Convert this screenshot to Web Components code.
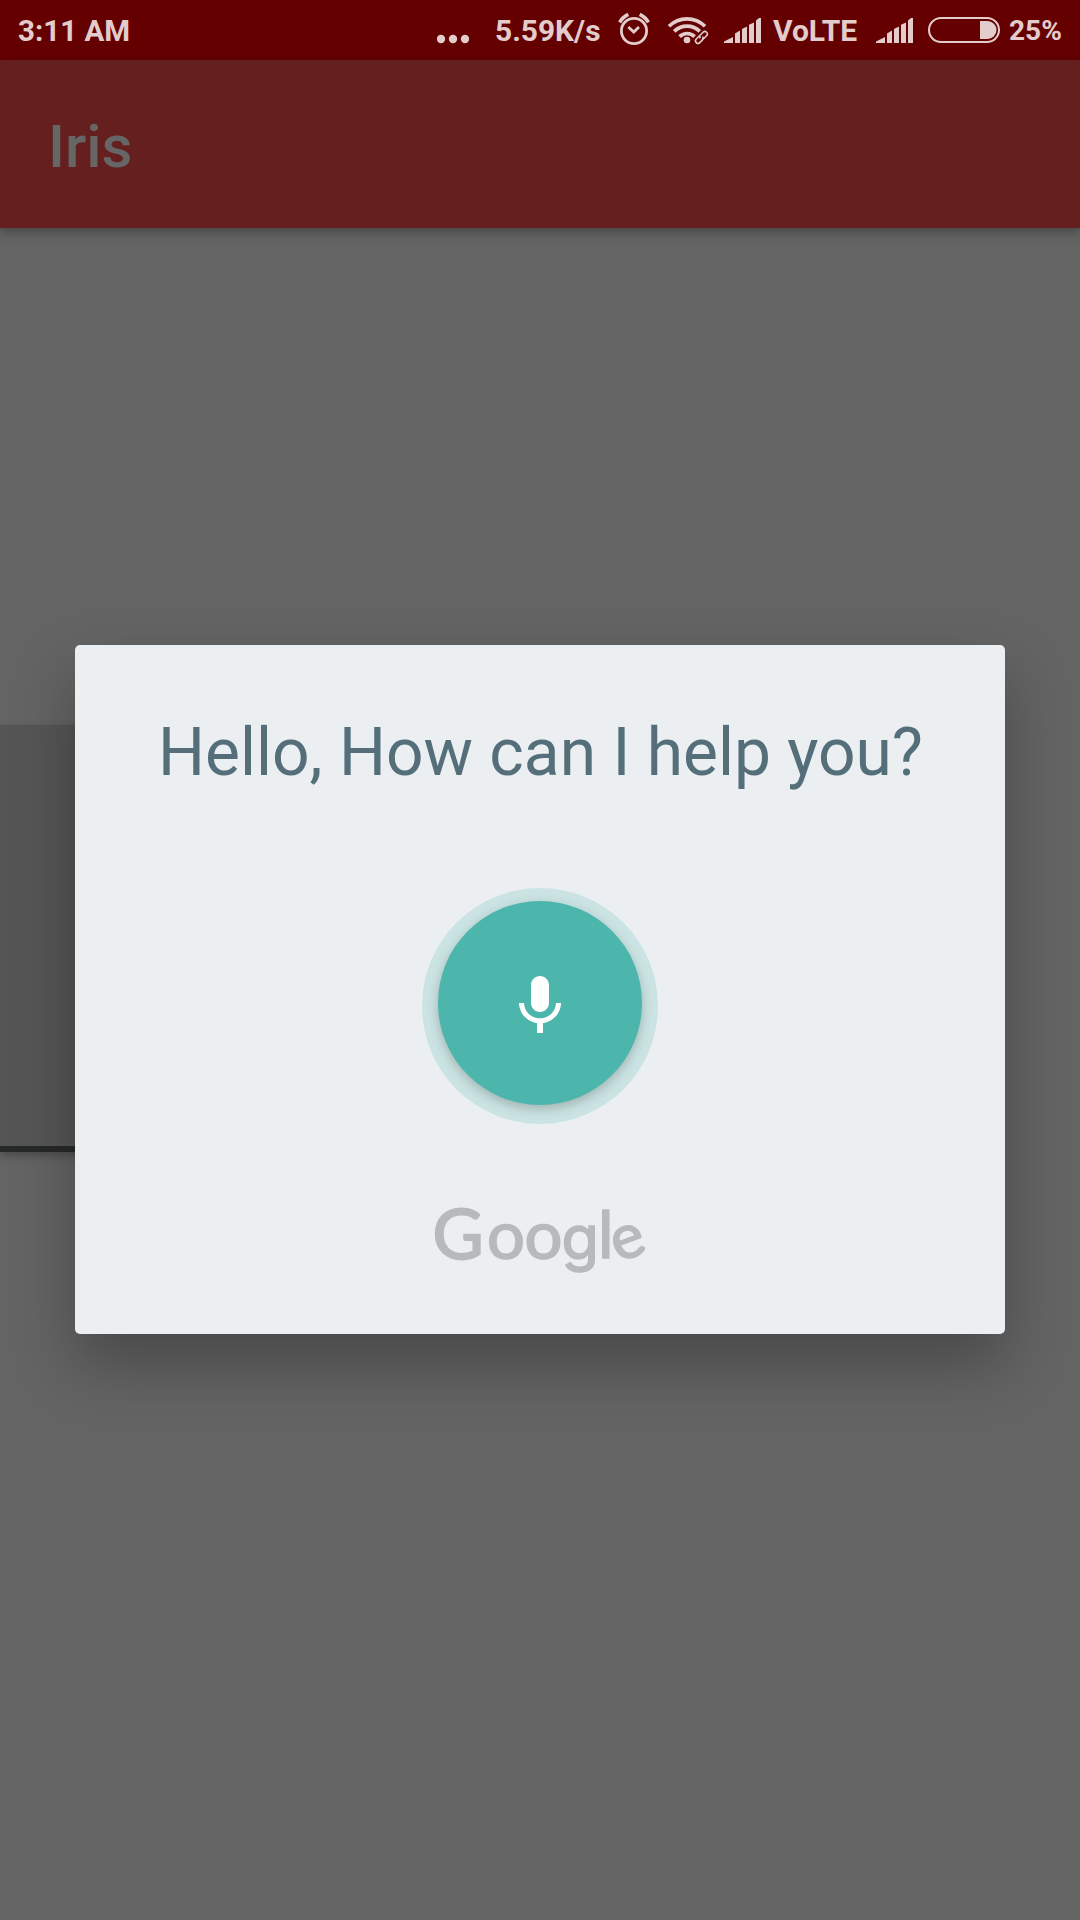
<!DOCTYPE html>
<html lang="en">
<head>
<meta charset="utf-8">
<title>Iris</title>
<style>
html,body{margin:0;padding:0;background:#646464}
body{font-family:Roboto,sans-serif;width:1080px;height:1920px;overflow:hidden}
</style>
</head>
<body>
<iris-screen></iris-screen>
<script>
const define = (name, html) => customElements.define(name, class extends HTMLElement {
  constructor() {
    super();
    const t = document.createElement('template');
    t.innerHTML = html;
    this.attachShadow({ mode: 'open' }).append(t.content.cloneNode(true));
  }
});

define('signal-icon', `
<style>:host{display:block;width:38px;height:60px}svg{display:block}</style>
<svg width="38" height="60" viewBox="0 0 38 60" fill="#e3cccc">
<path d="M0 43v-1.6L9 37v6zM11 43V33.4l5-2.8V43zM18 43V29l5-2.6V43zM25 43V24.8l5-2.4V43zM32 43V20.4l3-2.4h2v25z"/></svg>`);

define('alarm-icon', `
<style>:host{display:block;width:34px;height:60px}svg{display:block}</style>
<svg width="34" height="60" viewBox="617 0 34 60" fill="none" stroke="#e3cccc">
<circle cx="634" cy="31" r="12.6" stroke-width="2.8"/>
<path d="M628.3 27l5.5 5 5.2-5" stroke-width="2.8"/>
<path d="M619.7 22.4q2.6-5 8.6-8M639.7 14.4q6 3 8.6 8" stroke-width="3.6"/></svg>`);

define('wifi-icon', `
<style>:host{display:block;width:42px;height:60px}svg{display:block}</style>
<svg width="42" height="60" viewBox="667 0 42 60" fill="none" stroke="#e3cccc" stroke-width="3.7">
<path d="M669 26.3a25.5 25.5 0 0 1 36 0M674.2 31.4a18.2 18.2 0 0 1 25.6 0M679.6 36.6a10.6 10.6 0 0 1 15 0"/>
<circle cx="687" cy="40" r="3.3" fill="#e3cccc" stroke="none"/>
<g transform="rotate(-45 701.4 37.4)"><rect x="693" y="34.4" width="17" height="6" rx="3" stroke="#640000" stroke-width="3" fill="#640000"/>
<g stroke-width="1.6"><path d="M701.6 34.9h-5a2.500 2.500 0 0 0 0 5h3.500q2.300 0 2.600-2.300"/><path d="M701.200 39.900h5a2.500 2.500 0 0 0 0-5h-3.500q-2.300 0-2.600 2.300"/></g></g></svg>`);

define('battery-icon', `
<style>:host{display:block;width:72px;height:60px}svg{display:block}</style>
<svg width="72" height="60" viewBox="0 0 72 60">
<rect x="1" y="18" width="70" height="24" rx="12" fill="none" stroke="#e3cccc" stroke-width="2"/>
<path d="M52 21h7.500a9 9 0 0 1 0 18H52z" fill="#e3cccc"/></svg>`);

define('status-text', `
<style>:host{display:block;height:60px;font:700 29.5px/63px Roboto,sans-serif;color:#e3cccc;white-space:nowrap}</style><slot></slot>`);

define('status-bar', `
<style>
:host{display:flex;height:60px;background:#640000;box-sizing:border-box;padding-left:18px}
.time{width:419px}.dots{display:block;width:32px}
.rate{width:105px;margin-left:26px;font-size:29.9px;line-height:61px}
alarm-icon{margin-left:17px}wifi-icon{margin-left:16px}
.s1{margin-left:15px}.volte{width:87px;margin-left:11px;font-size:30px;line-height:61px}.s2{margin-left:16px}
battery-icon{margin-left:14px}.pct{margin-left:9px;font-size:28px;line-height:61px}
</style>
<status-text class="time">3:11 AM</status-text>
<svg class="dots" width="32" height="60" viewBox="0 0 32 60" fill="#e3cccc"><circle cx="4" cy="39" r="4.200"/><circle cx="16" cy="39" r="4.200"/><circle cx="28" cy="39" r="4.200"/></svg>
<status-text class="rate">5.59K/s</status-text>
<alarm-icon></alarm-icon>
<wifi-icon></wifi-icon>
<signal-icon class="s1"></signal-icon>
<status-text class="volte">VoLTE</status-text>
<signal-icon class="s2"></signal-icon>
<battery-icon></battery-icon>
<status-text class="pct">25%</status-text>`);

define('app-bar', `
<style>
:host{display:flex;align-items:center;height:168px;padding:5px 48px 0;box-sizing:border-box;background:#651f1f;color:#666;
box-shadow:0 4px 10px rgba(0,0,0,.32);font:500 60px/70px Roboto,sans-serif}
</style><slot></slot>`);

define('back-card', `
<style>
:host{display:block;width:540px;height:427px;box-sizing:border-box;background:#555;border-bottom:6px solid #272928;
box-shadow:0 4px 8px rgba(0,0,0,.25)}
</style>`);

define('mic-button', `
<style>
:host{display:flex;width:236px;height:236px;border-radius:50%;background:#cbe4e3;justify-content:center;align-items:flex-start;padding-top:13px;box-sizing:border-box}
.disc{display:flex;width:204px;height:204px;border-radius:50%;background:#4db6ac;box-shadow:0 4px 12px rgba(0,0,0,.22);justify-content:center;align-items:flex-start;padding-top:69px;box-sizing:border-box}
</style>
<div class="disc"><svg width="72" height="72" viewBox="0 0 24 24" fill="#fff"><path d="M12 14c1.660 0 2.990-1.340 2.990-3L15 5c0-1.660-1.340-3-3-3S9 3.340 9 5v6c0 1.660 1.340 3 3 3zm5.300-3c0 3-2.540 5.100-5.300 5.100S6.700 14 6.700 11H5c0 3.410 2.720 6.230 6 6.720V21h2v-3.280c3.280-.480 6-3.300 6-6.720h-1.700z"/></svg></div>`);

define('google-mark', `
<style>:host{display:block;width:220px;height:84px}svg{display:block;overflow:visible}text{font-family:Lato,sans-serif;font-size:67px;fill:#b6babd;stroke:#b6babd;stroke-width:1.600}.cap{font-size:70px;stroke-width:2}.g{font-family:Inter,sans-serif;font-size:61px}.l{font-size:66px}.e{font-size:62px}</style>
<svg width="220" height="84" viewBox="430 1196 220 84"><text x="432.5 487 524.5 561.5 598 618" y="1257 1257 1257 1257 1256 1260.5" rotate="0 0 0 0 0 -20"><tspan class="cap">G</tspan>oo<tspan class="g">g</tspan><tspan class="l">l</tspan><tspan class="e">e</tspan></text></svg>`);

define('voice-dialog', `
<style>
:host{display:flex;flex-direction:column;align-items:center;width:930px;height:689px;box-sizing:border-box;padding-top:68px;
background:#ebeff2;border-radius:5px;box-shadow:0 30px 62px rgba(0,0,0,.28)}
.prompt{font:400 65.900px/80px Roboto,sans-serif;color:#546e7a;white-space:nowrap;padding-left:1px}
mic-button{margin-top:95px}google-mark{margin-top:74px}
</style>
<div class="prompt"><slot></slot></div>
<mic-button></mic-button>
<google-mark></google-mark>`);

define('iris-screen', `
<style>
:host{display:flex;flex-direction:column;position:relative;width:1080px;height:1920px;overflow:hidden;background:#646464}
main{padding-top:497px}
voice-dialog{position:absolute;left:75px;top:645px}
</style>
<status-bar></status-bar>
<app-bar>Iris</app-bar>
<main><back-card></back-card></main>
<voice-dialog>Hello, How can I help you?</voice-dialog>`);
</script>
</body>
</html>
